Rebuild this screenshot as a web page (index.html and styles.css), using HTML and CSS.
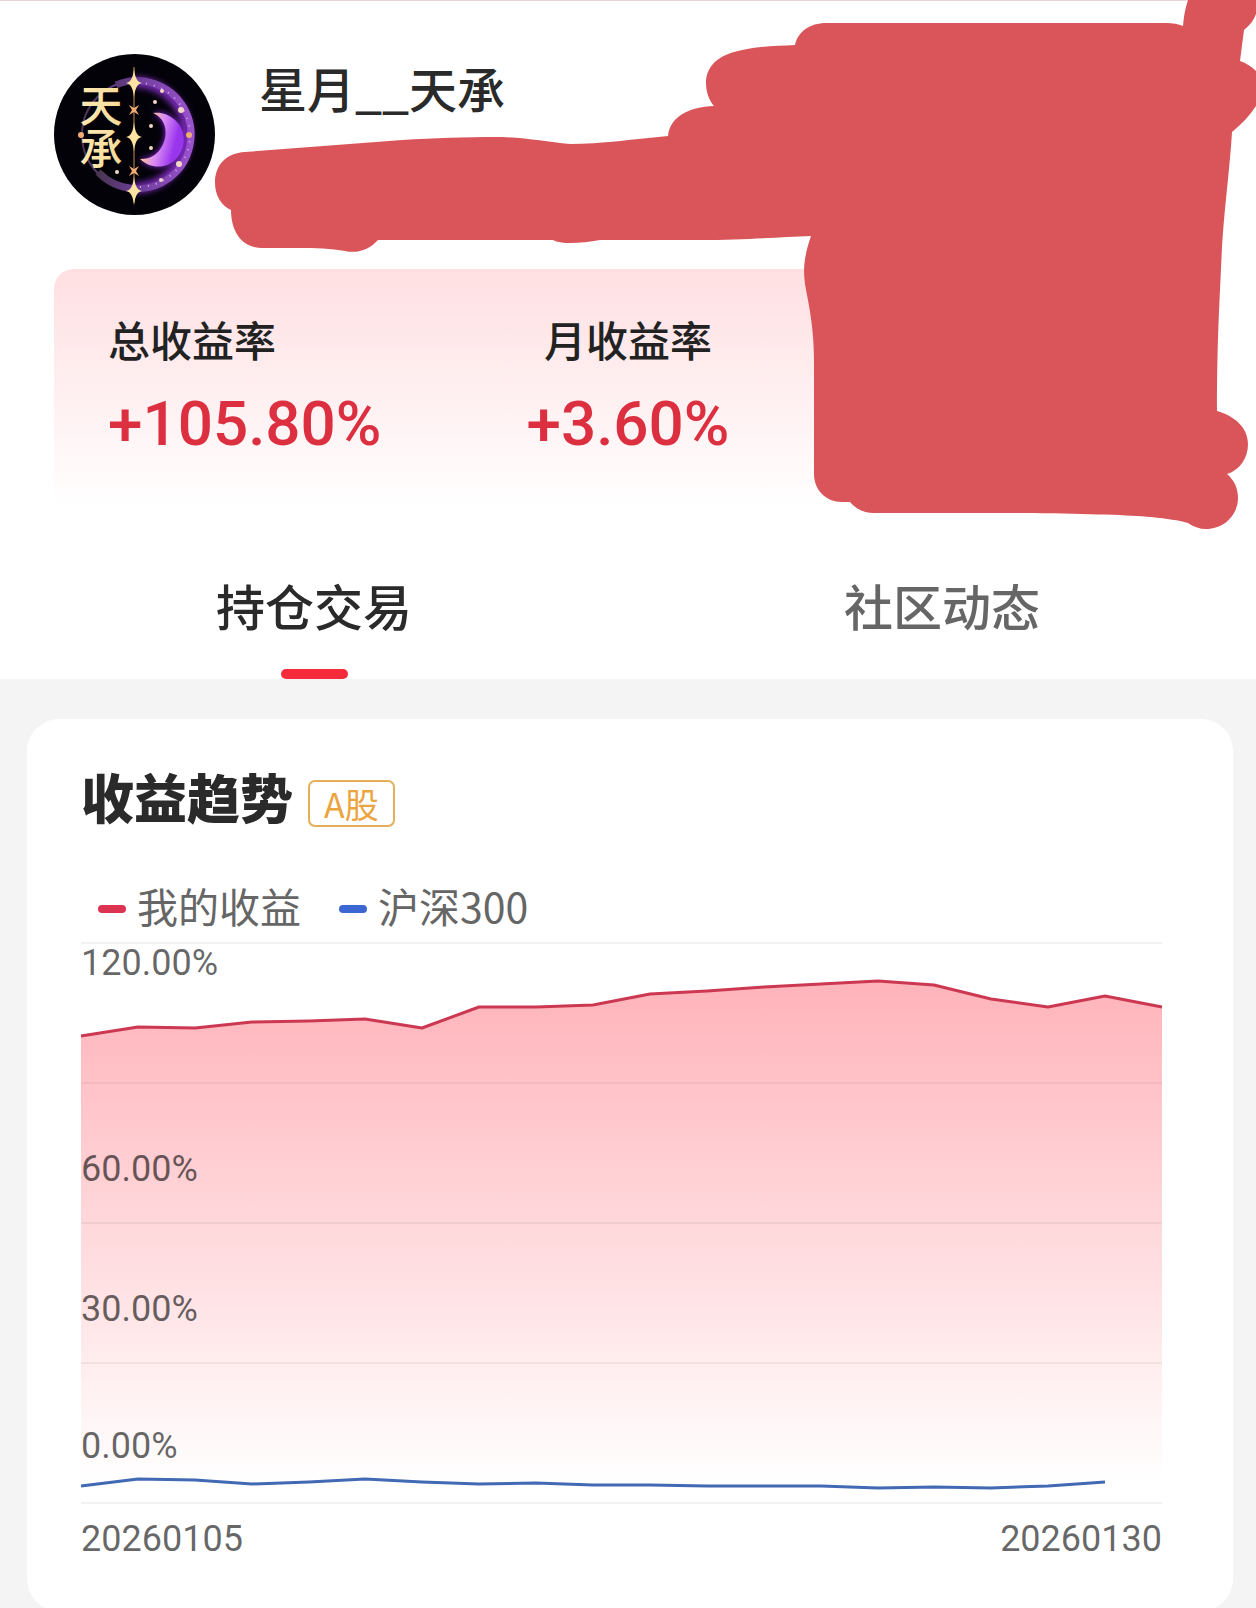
FILE: index.html
```html
<!DOCTYPE html>
<html lang="zh-CN">
<head>
<meta charset="utf-8">
<meta name="viewport" content="width=device-width, initial-scale=1">
<title>星月__天承</title>
<link rel="stylesheet" href="styles.css">
</head>
<body>
<header class="top">
  <div class="profile">
    <svg class="avatar" viewBox="0 0 161 161" role="img" aria-label="天承">
      <defs>
        <linearGradient id="ring" x1="0" y1="0" x2="1" y2="0">
          <stop offset="0" stop-color="#4a3550"/>
          <stop offset="0.4" stop-color="#6b3d98"/>
          <stop offset="1" stop-color="#9a52cc"/>
        </linearGradient>
        <linearGradient id="moon" x1="0" y1="0" x2="1" y2="0.3">
          <stop offset="0.3" stop-color="#f6b9a4"/>
          <stop offset="0.55" stop-color="#d98bf6"/>
          <stop offset="0.9" stop-color="#9a35ee"/>
        </linearGradient>
        <linearGradient id="gold" x1="0" y1="0" x2="0" y2="1">
          <stop offset="0" stop-color="#ffe9b0"/>
          <stop offset="1" stop-color="#e8c983"/>
        </linearGradient>
        <filter id="glow" x="-30%" y="-30%" width="160%" height="160%">
          <feGaussianBlur stdDeviation="3"/>
        </filter>
        <path id="star" d="M0-15Q1-1 8 0Q1 1 0 15Q-1 1-8 0Q-1-1 0-15Z"/>
        <path id="spark" d="M-5-5L0-2L5-5L2 0L5 5L0 2L-5 5L-2 0Z"/>
      </defs>
      <circle cx="80.5" cy="80.5" r="80.5" fill="#030209"/>
      <path d="M80 28A53 53 0 0 1 80 134" fill="none" stroke="#7a2bb8" stroke-width="10" filter="url(#glow)"/>
      <circle cx="82" cy="81" r="54" fill="none" stroke="url(#ring)" stroke-width="2"/>
      <path d="M62 31A54 54 0 1 1 44 118" fill="none" stroke="url(#ring)" stroke-width="7"/>
      <path d="M84 29A52 52 0 0 1 84 133" fill="none" stroke="#d9a8f2" stroke-width="2" stroke-dasharray="1 7"/>
      <path d="M99 59C113 65 115 82 107 94C102 102 95 105 86 105C96 115 113 115 122 105C133 93 132 76 121 66C114 60 107 58 99 59Z" fill="#8b2be0" filter="url(#glow)"/>
      <path d="M99 59C113 65 115 82 107 94C102 102 95 105 86 105C96 115 113 115 122 105C133 93 132 76 121 66C114 60 107 58 99 59Z" fill="url(#moon)"/>
      <path d="M80 13V149" stroke="#c88d4c" stroke-width="1"/>
      <g fill="#ffe3a0">
        <use href="#star" x="80" y="29"/>
        <use href="#star" x="80" y="83"/>
        <use href="#star" x="80" y="137"/>
      </g>
      <g fill="#f0ac72">
        <use href="#spark" x="80" y="56"/>
        <use href="#spark" x="80" y="117"/>
        <circle cx="27" cy="81" r="3"/>
        <circle cx="135" cy="81" r="3"/>
      </g>
      <g fill="#f2d7c4">
        <circle cx="101" cy="48" r="2"/>
        <circle cx="97" cy="72" r="2"/>
        <circle cx="97" cy="94" r="2"/>
        <circle cx="63" cy="118" r="2"/>
        <circle cx="127" cy="56" r="3"/>
        <circle cx="125" cy="110" r="3"/>
        <circle cx="107" cy="126" r="2"/>
        <circle cx="108" cy="37" r="2"/>
      </g>
      <text class="avatar-text" x="47" y="30" fill="url(#gold)">天承</text>
    </svg>
    <h1 class="name">星月__天承</h1>
  </div>
  <dl class="stats">
    <div class="stat">
      <dt>总收益率</dt>
      <dd>+105.80%</dd>
    </div>
    <div class="stat stat-center">
      <dt>月收益率</dt>
      <dd>+3.60%</dd>
    </div>
  </dl>
  <nav class="tabs">
    <button class="tab tab-active" type="button">持仓交易</button>
    <button class="tab" type="button">社区动态</button>
  </nav>
  <svg class="scribble" viewBox="0 0 1256 540" aria-hidden="true">
    <path d="M245 152C226 153 215 165 215 183C215 196 222 206 231 210C231 233 243 248 262 248C300 248 325 247 345 251C358 254 370 249 378 240H553C562 245 582 243 600 240H700C745 240 780 237 811 236C802 262 803 276 807 295C812 320 814 340 814 362V474C814 490 826 502 842 502H850C856 509 864 513 874 513H1033C1090 514 1130 515 1151 517C1168 519 1178 520 1188 523C1194 527 1200 529 1206 529C1225 529 1238 514 1238 498C1238 488 1234 480 1227 474C1240 470 1248 458 1248 444C1248 428 1235 416 1217 411C1217 350 1219 310 1221 269C1223 215 1229 180 1232 132C1242 124 1250 115 1256 106V71C1252 67 1246 63 1240 61L1244 30C1250 25 1254 20 1256 14V0H1188Q1184 12 1183 26Q1176 23 1166 23H829C811 22 798 31 795 45C770 46 752 47 734 52C716 57 706 68 706 83C706 92 709 100 714 106C688 107 670 117 668 136C636 139 600 144 570 144C545 142 525 137 496 137C465 137 435 138 402 140Z" fill="#da555a"/>
  </svg>
</header>
<main class="content">
  <section class="card">
    <div class="card-head">
      <h2 class="card-title">收益趋势</h2>
      <span class="badge">A股</span>
    </div>
    <ul class="legend">
      <li class="legend-mine">我的收益</li>
      <li class="legend-index">沪深300</li>
    </ul>
    <div class="chart">
      <svg class="plot" viewBox="0 0 1081 560" preserveAspectRatio="none" aria-hidden="true">
        <defs>
          <linearGradient id="area" gradientUnits="userSpaceOnUse" x1="0" y1="38" x2="0" y2="540">
            <stop offset="0" stop-color="#ffb3ba"/>
            <stop offset="0.5" stop-color="#ffd9dc"/>
            <stop offset="1" stop-color="#ffffff"/>
          </linearGradient>
        </defs>
        <path d="M0 93L57 84L114 85L171 79L228 78L284 76L341 85L398 64L455 64L512 62L569 51L626 48L683 44L740 41L797 38L853 42L910 56L967 64L1024 53L1081 64V560H0Z" fill="url(#area)"/>
        <path class="grid" d="M0 0H1081M0 140H1081M0 280H1081M0 420H1081M0 560H1081"/>
        <path class="line line-mine" d="M0 93L57 84L114 85L171 79L228 78L284 76L341 85L398 64L455 64L512 62L569 51L626 48L683 44L740 41L797 38L853 42L910 56L967 64L1024 53L1081 64"/>
        <path class="line line-index" d="M0 543L57 536L114 537L171 541L228 539L284 536L341 539L398 541L455 540L512 542L569 542L626 543L683 543L740 543L797 545L853 544L910 545L967 543L1024 539"/>
      </svg>
      <div class="scale">
        <span>120.00%</span>
        <span>60.00%</span>
        <span>30.00%</span>
        <span>0.00%</span>
      </div>
    </div>
    <div class="dates">
      <time datetime="2026-01-05">20260105</time>
      <time datetime="2026-01-30">20260130</time>
    </div>
  </section>
</main>
</body>
</html>
```
FILE: styles.css
```css
* {
  box-sizing: border-box;
  margin: 0;
  padding: 0;
}

body {
  background: #f4f4f4;
  color: #2a2a2a;
  font-family: Roboto, "Noto Sans CJK SC", sans-serif;
}

.top {
  position: relative;
  background: #fff;
  border-top: 1px solid #ecd3d6;
}

.profile {
  display: flex;
  align-items: flex-start;
  gap: 44px;
  padding: 53px 54px 54px;
}

.avatar {
  width: 161px;
  height: 161px;
  flex: none;
}

.avatar-text {
  font-family: "Noto Sans CJK SC", sans-serif;
  font-size: 43px;
  font-weight: 500;
  writing-mode: vertical-rl;
}

.name {
  font-family: "Noto Sans CJK SC", sans-serif;
  font-size: 48px;
  font-weight: 500;
  line-height: 66px;
}

.stats {
  display: grid;
  grid-template-columns: 1fr auto 1fr;
  margin: 0 54px;
  padding: 50px 54px 50px;
  border-radius: 20px;
  background: linear-gradient(#ffdfe2, #fff);
}

.stat {
  display: flex;
  flex-direction: column;
  gap: 21px;
}

.stat-center {
  align-items: center;
}

.stat dt {
  font-size: 42px;
  font-weight: 500;
  line-height: 48px;
  color: #222;
}

.stat dd {
  font-size: 62px;
  font-weight: 500;
  line-height: 72px;
  color: #dc3040;
}

.tabs {
  display: flex;
  padding-top: 63px;
}

.tab {
  flex: 1;
  display: flex;
  flex-direction: column;
  align-items: center;
  gap: 32px;
  border: 0;
  background: none;
  color: #666;
  font: 500 49px/64px "Noto Sans CJK SC", sans-serif;
}

.tab::after {
  content: "";
  width: 67px;
  height: 10px;
  border-radius: 5px;
}

.tab-active {
  color: #2a2a2a;
}

.tab-active::after {
  background: #f52a3b;
}

.scribble {
  position: absolute;
  top: -1px;
  left: 0;
  width: 100%;
  pointer-events: none;
}

.content {
  padding: 40px 23px 0 27px;
}

.card {
  padding: 50px 71px 32px 54px;
  border-radius: 32px;
  background: #fff;
}

.card-head {
  display: flex;
  align-items: center;
  gap: 15px;
}

.card-title {
  font-size: 53px;
  font-weight: 900;
  line-height: 64px;
}

.badge {
  margin-top: 4px;
  padding: 0 14px;
  border: 2px solid #e5ae58;
  border-radius: 7px;
  color: #eba440;
  font: 400 34px/43px "Noto Sans CJK SC", sans-serif;
}

.legend {
  display: flex;
  gap: 38px;
  margin-top: 44px;
  padding-left: 17px;
  list-style: none;
}

.legend li {
  display: flex;
  align-items: center;
  gap: 11px;
  color: #666;
  font: 400 41px/56px "Noto Sans CJK SC", sans-serif;
}

.legend li::before {
  content: "";
  width: 28px;
  height: 8px;
  margin-top: 8px;
  border-radius: 4px;
}

.legend-mine::before {
  background: #dc3350;
}

.legend-index::before {
  background: #3c66d2;
}

.chart {
  display: grid;
  margin-top: 10px;
}

.plot,
.scale {
  grid-area: 1 / 1;
}

.plot {
  width: 100%;
  height: 560px;
  overflow: visible;
}

.grid,
.line {
  fill: none;
  vector-effect: non-scaling-stroke;
}

.grid {
  stroke: #000;
  stroke-opacity: 0.05;
  stroke-width: 2px;
}

.line {
  stroke-width: 3px;
  stroke-linejoin: round;
}

.line-mine {
  stroke: #cc3852;
}

.line-index {
  stroke: #4169b4;
}

.scale {
  display: grid;
  grid-template-rows: 140px 140px 140px 137px;
  align-items: end;
}

.scale span,
.dates {
  color: rgba(0, 0, 0, 0.6);
  font-size: 36px;
  line-height: 40px;
}

.scale span {
  padding-bottom: 34px;
}

.scale span:first-child {
  align-self: start;
  padding: 0;
}

.dates {
  display: flex;
  justify-content: space-between;
  padding: 16px 0 20px;
}
```
